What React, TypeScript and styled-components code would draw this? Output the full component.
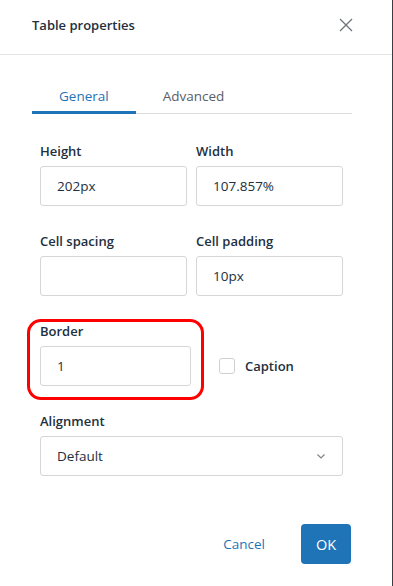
import React, { useState } from 'react';
import styled, { createGlobalStyle } from 'styled-components';

const GlobalStyle = createGlobalStyle`
  html, body { margin: 0; padding: 0; background: #fff; }
  body {
    font-family: 'Segoe UI', 'Open Sans', 'Liberation Sans', sans-serif;
    color: #333;
  }
  * { box-sizing: border-box; }
`;

const Dialog = styled.div`
  width: 393px;
  height: 586px;
  background: #fff;
  border-right: 1px solid #3a3d42;
  display: flex;
  flex-direction: column;
`;

const Header = styled.header`
  height: 55px;
  padding: 0 39px 0 32px;
  border-bottom: 1px solid #e3e3e3;
  display: flex;
  align-items: center;
  justify-content: space-between;
`;

const Title = styled.h1`
  margin: 0 0 4px;
  font-size: 13px;
  font-weight: 600;
  color: #222f3e;
`;

const CloseButton = styled.button`
  border: 0;
  background: none;
  padding: 0;
  margin-bottom: 4px;
  width: 14px;
  height: 14px;
  display: flex;
  cursor: pointer;
`;

const Body = styled.div`
  padding: 23px 40px 0 32px;
`;

const TabList = styled.div`
  display: flex;
  border-bottom: 1px solid #dcdcdc;
  margin-bottom: 27px;
`;

const Tab = styled.button<{ active?: boolean }>`
  border: 0;
  background: none;
  font: inherit;
  font-size: 13.5px;
  line-height: 20px;
  padding: 8px 27px 5px;
  margin-bottom: -1px;
  color: ${({ active }) => (active ? '#1f73b7' : '#585e67')};
  border-bottom: 3px solid ${({ active }) => (active ? '#1f73b7' : 'transparent')};
  cursor: pointer;
`;

const Fields = styled.div`
  padding: 0 9px 0 8px;
  display: flex;
  flex-direction: column;
  gap: 25px;
`;

const Row = styled.div`
  display: grid;
  grid-template-columns: 1fr 1fr;
  column-gap: 9px;
`;

const BorderRow = styled.div`
  display: flex;
  align-items: flex-end;
  gap: 28px;
`;

const Field = styled.label<{ highlighted?: boolean; width?: number }>`
  display: flex;
  flex-direction: column;
  gap: 5px;
  position: relative;
  width: ${({ width }) => (width ? `${width}px` : 'auto')};

  ${({ highlighted }) =>
    highlighted &&
    `
    &::after {
      content: '';
      position: absolute;
      left: -13px;
      top: -2px;
      right: -13px;
      bottom: -14px;
      border: 3px solid #ff0000;
      border-radius: 14px;
      pointer-events: none;
    }
  `}
`;

const Label = styled.span`
  font-size: 13px;
  font-weight: 600;
  line-height: 20px;
  color: #222f3e;
`;

const Input = styled.input`
  height: 40px;
  width: 100%;
  border: 1px solid #d6d6d6;
  border-radius: 3px;
  padding: 0 16px;
  font: inherit;
  font-size: 13.5px;
  color: #222f3e;
  outline: none;
`;

const CheckboxLabel = styled.label`
  display: flex;
  align-items: center;
  gap: 10px;
  height: 40px;
  font-size: 13px;
  font-weight: 600;
  color: #222f3e;
  cursor: pointer;
`;

const CheckBox = styled.span`
  width: 16px;
  height: 16px;
  border: 1px solid #cfcfcf;
  border-radius: 3px;
  background: #fff;
`;

const Select = styled.div`
  height: 40px;
  border: 1px solid #d6d6d6;
  border-radius: 3px;
  padding: 0 17px 0 16px;
  display: flex;
  align-items: center;
  justify-content: space-between;
  font-size: 13.5px;
  color: #222f3e;
`;

const Footer = styled.footer`
  padding: 48px 41px 0;
  display: flex;
  align-items: center;
  justify-content: flex-end;
  gap: 36px;
`;

const TextButton = styled.button`
  border: 0;
  background: none;
  padding: 0;
  font: inherit;
  font-size: 13.5px;
  color: #1f73b7;
  cursor: pointer;
`;

const PrimaryButton = styled.button`
  border: 0;
  width: 50px;
  height: 40px;
  border-radius: 4px;
  background: #1f73b7;
  color: #fff;
  font: inherit;
  font-size: 14.5px;
  cursor: pointer;
`;

export default function App() {
  const [tab, setTab] = useState<'general' | 'advanced'>('general');

  return (
    <>
      <GlobalStyle />
      <Dialog>
        <Header>
          <Title>Table properties</Title>
          <CloseButton aria-label="Close">
            <svg width="14" height="14" viewBox="0 0 14 14">
              <path d="M1 1 L13 13 M13 1 L1 13" stroke="#6d737b" strokeWidth="1.3" />
            </svg>
          </CloseButton>
        </Header>

        <Body>
          <TabList>
            <Tab active={tab === 'general'} onClick={() => setTab('general')}>General</Tab>
            <Tab active={tab === 'advanced'} onClick={() => setTab('advanced')}>Advanced</Tab>
          </TabList>

          <Fields>
            <Row>
              <Field>
                <Label>Height</Label>
                <Input defaultValue="202px" />
              </Field>
              <Field>
                <Label>Width</Label>
                <Input defaultValue="107.857%" />
              </Field>
            </Row>
            <Row>
              <Field>
                <Label>Cell spacing</Label>
                <Input defaultValue="" />
              </Field>
              <Field>
                <Label>Cell padding</Label>
                <Input defaultValue="10px" />
              </Field>
            </Row>
            <BorderRow>
              <Field highlighted width={151}>
                <Label>Border</Label>
                <Input defaultValue="1" />
              </Field>
              <CheckboxLabel>
                <CheckBox />
                Caption
              </CheckboxLabel>
            </BorderRow>
            <Field>
              <Label>Alignment</Label>
              <Select>
                Default
                <svg width="8" height="5" viewBox="0 0 8 5">
                  <path d="M0.5 0.5 L4 4 L7.5 0.5" stroke="#7e848b" strokeWidth="1.2" fill="none" />
                </svg>
              </Select>
            </Field>
          </Fields>
        </Body>

        <Footer>
          <TextButton>Cancel</TextButton>
          <PrimaryButton>OK</PrimaryButton>
        </Footer>
      </Dialog>
    </>
  );
}
